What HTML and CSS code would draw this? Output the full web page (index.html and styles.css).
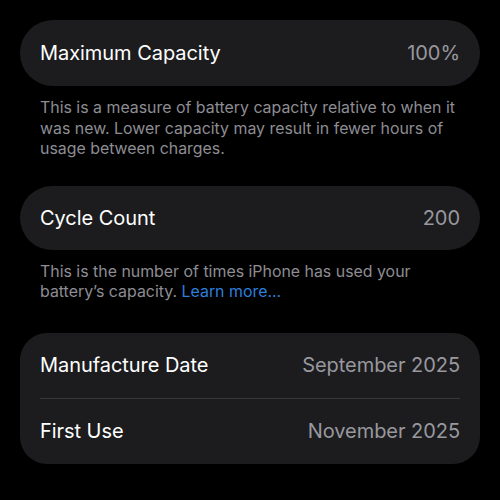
FILE: index.html
```html
<!DOCTYPE html>
<html lang="en">
  <head>
    <meta charset="UTF-8" />
    <meta name="viewport" content="width=device-width, initial-scale=1.0" />
    <title>Battery Health</title>
    <link rel="stylesheet" href="styles.css">
  </head>
  <body>
    <div class="page">
      <div class="group pill">
        <div class="row">
          <span class="label">Maximum Capacity</span>
          <span class="value">100%</span>
        </div>
      </div>
      <p class="footer">
        This is a measure of battery capacity relative to when it<br>
        was new. Lower capacity may result in fewer hours of<br>
        usage between charges.
      </p>

      <div class="group pill">
        <div class="row short">
          <span class="label">Cycle Count</span>
          <span class="value">200</span>
        </div>
      </div>
      <p class="footer last">
        This is the number of times iPhone has used your<br>
        battery’s capacity. <a href="#">Learn more...</a>
      </p>

      <div class="group list">
        <div class="row">
          <span class="label">Manufacture Date</span>
          <span class="value">September 2025</span>
        </div>
        <div class="row">
          <span class="label">First Use</span>
          <span class="value">November 2025</span>
        </div>
      </div>
    </div>
  </body>
</html>
```

FILE: styles.css
```css
body {
  margin: 0;
  background: #000;
  font-family: Inter, "Noto Sans", sans-serif;
  -webkit-font-smoothing: antialiased;
}

.page {
  padding: 20px 20px 0 20px;
}

.group {
  background: #1c1c1e;
}

.group.pill {
  border-radius: 33px;
}

.group.list {
  border-radius: 27px;
}

.row {
  display: flex;
  justify-content: space-between;
  align-items: center;
  height: 66px;
  margin: 0 20px;
  font-size: 20px;
  letter-spacing: -0.05px;
}

.row.short {
  height: 64px;
}

.list .row {
  height: 65px;
}

.list .row + .row {
  border-top: 1px solid #38383a;
}

.label {
  color: #fff;
}

.value {
  color: #98989e;
}

.footer {
  margin: 12px 20px 26px 20px;
  font-size: 15.9px;
  line-height: 20.5px;
  color: #8d8d93;
  white-space: nowrap;
}

.footer.last {
  margin-bottom: 30px;
}

.footer a {
  color: #2d7fdc;
  text-decoration: none;
}
```
